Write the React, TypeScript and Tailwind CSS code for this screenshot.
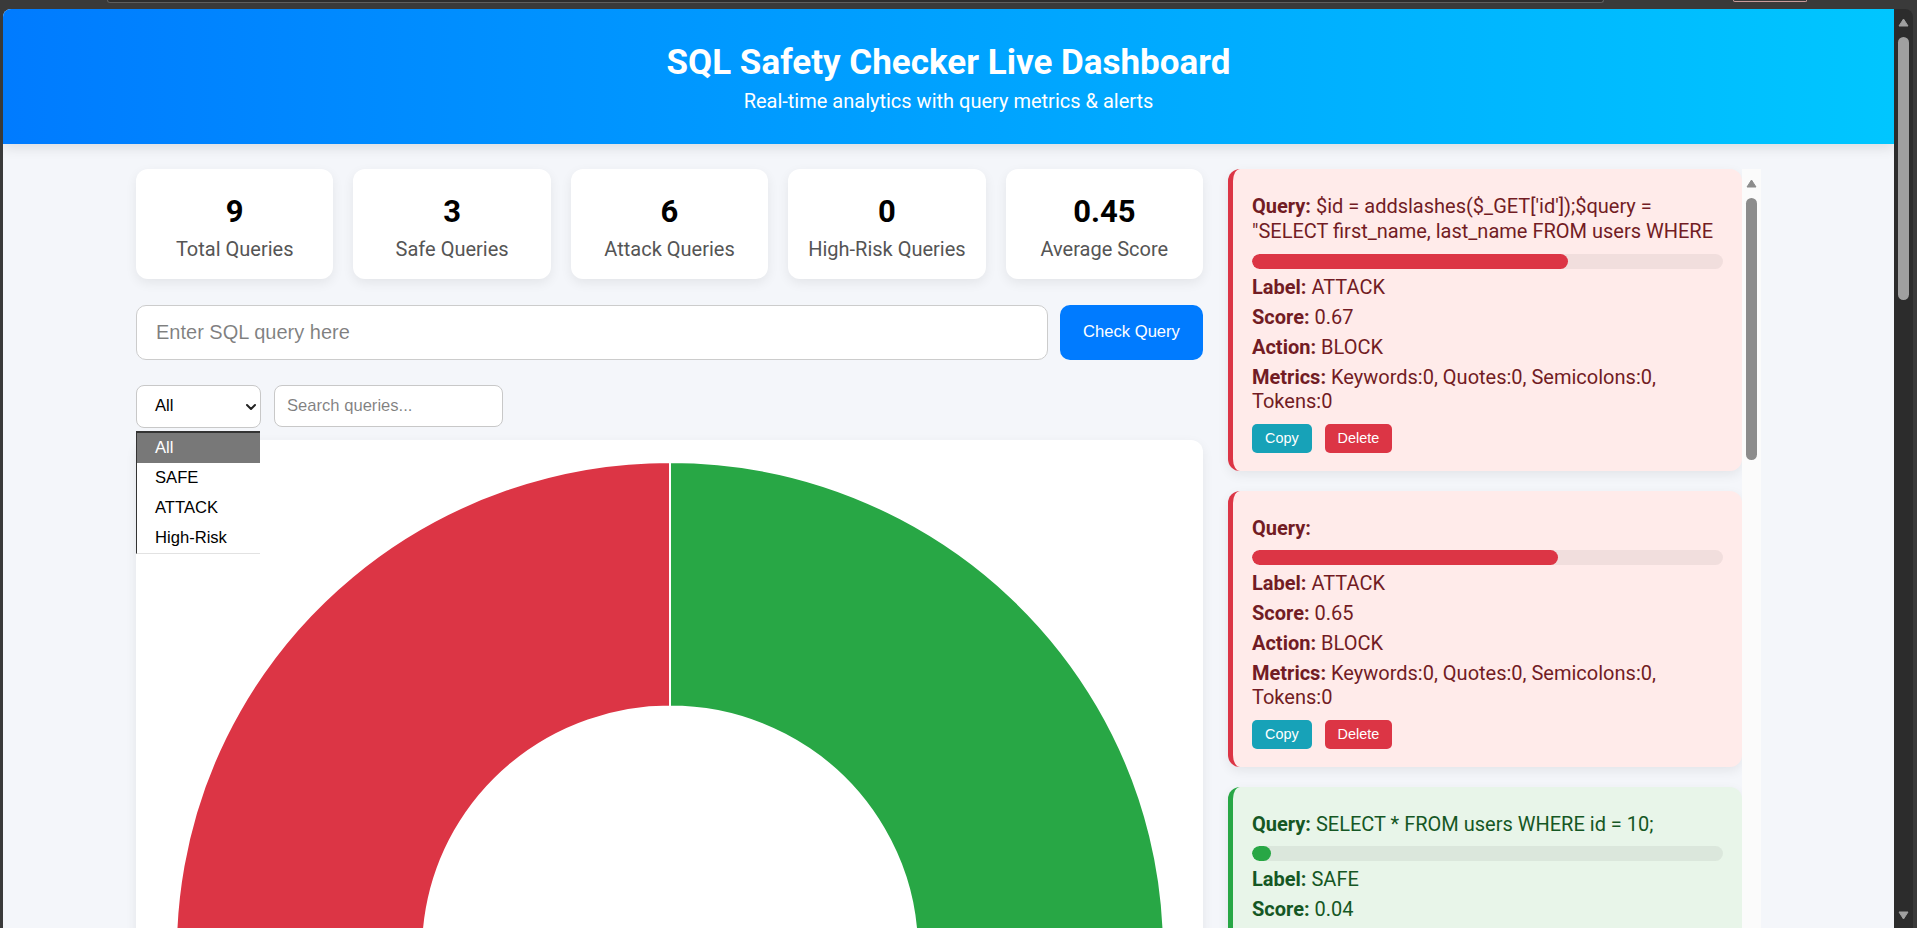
import { ChevronDown } from "lucide-react";

interface Alert {
  query: string[];
  label: string;
  score: number;
  action: string;
  metrics: string;
  tone: "red" | "green";
}

const stats = [
  { value: "9", label: "Total Queries" },
  { value: "3", label: "Safe Queries" },
  { value: "6", label: "Attack Queries" },
  { value: "0", label: "High-Risk Queries" },
  { value: "0.45", label: "Average Score" },
];

const alerts: Alert[] = [
  {
    query: ["$id = addslashes($_GET['id']);$query =", "\"SELECT first_name, last_name FROM users WHERE"],
    label: "ATTACK",
    score: 0.67,
    action: "BLOCK",
    metrics: "Keywords:0, Quotes:0, Semicolons:0, Tokens:0",
    tone: "red",
  },
  {
    query: [],
    label: "ATTACK",
    score: 0.65,
    action: "BLOCK",
    metrics: "Keywords:0, Quotes:0, Semicolons:0, Tokens:0",
    tone: "red",
  },
  {
    query: ["SELECT * FROM users WHERE id = 10;"],
    label: "SAFE",
    score: 0.04,
    action: "ALLOW",
    metrics: "Keywords:1, Quotes:0, Semicolons:1, Tokens:8",
    tone: "green",
  },
];

const StatCard = ({ value, label }: { value: string; label: string }) => (
  <div className="flex-1 bg-white rounded-[12px] shadow-[0_4px_12px_rgba(0,0,0,0.07)] pt-[25px] pb-[18px] text-center">
    <div className="text-[31px] font-bold leading-[36px] text-black">{value}</div>
    <div className="mt-[8px] text-[20px] leading-[23px] text-[#555]">{label}</div>
  </div>
);

const AlertCard = ({ alert }: { alert: Alert }) => {
  const red = alert.tone === "red";
  return (
    <div
      className={
        red
          ? "rounded-[12px] border-l-[5px] border-[#dc3545] bg-[#ffebea] text-[#721c24] pt-[25px] pb-[18px] px-[19px] shadow-[0_4px_12px_rgba(0,0,0,0.07)] text-[20px] leading-[24px]"
          : "rounded-[12px] border-l-[5px] border-[#28a745] bg-[#e8f5e9] text-[#155724] pt-[25px] pb-[18px] px-[19px] shadow-[0_4px_12px_rgba(0,0,0,0.07)] text-[20px] leading-[24px]"
      }
    >
      <p className={alert.query.length > 1 ? "leading-[25px]" : ""}>
        <b>Query:</b>{" "}
        {alert.query.map((line, i) => (
          <span key={i}>
            {i > 0 && <br />}
            {line}
          </span>
        ))}
      </p>
      <div className="mt-[10px] h-[15px] rounded-full bg-black/[0.055] overflow-hidden">
        <div
          className={red ? "h-full rounded-full bg-[#dc3545]" : "h-full rounded-full bg-[#28a745]"}
          style={{ width: `${alert.score * 100}%` }}
        />
      </div>
      <p className="mt-[6px]">
        <b>Label:</b> {alert.label}
      </p>
      <p className="mt-[6px]">
        <b>Score:</b> {alert.score.toFixed(2)}
      </p>
      <p className="mt-[6px]">
        <b>Action:</b> {alert.action}
      </p>
      <p className="mt-[6px]">
        <b>Metrics:</b> {alert.metrics}
      </p>
      <div className="mt-[11px] flex gap-[13px] font-['Liberation_Sans',Arial,sans-serif] text-[14.4px] leading-normal">
        <button className="h-[29px] px-[13px] rounded-[5px] bg-[#17a2b8] text-white">Copy</button>
        <button className="h-[29px] px-[13px] rounded-[5px] bg-[#dc3545] text-white">Delete</button>
      </div>
    </div>
  );
};

const Triangle = ({ down, color }: { down?: boolean; color: string }) => (
  <svg width="11" height="9" viewBox="0 0 11 9">
    <path d={down ? "M1 1 H10 L5.5 8 Z" : "M1 8 H10 L5.5 1 Z"} fill={color} stroke={color} strokeLinejoin="round" />
  </svg>
);

const DoughnutChart = () => (
  <svg width="990" height="980" viewBox="0 0 990 980" className="block mx-auto">
    <path
      d="M495 1 A494 489 0 0 1 922.8 734.5 L708.9 612.25 A247 244.5 0 0 0 495 245.5 Z"
      fill="#28a745"
      stroke="#fff"
      strokeWidth="2"
    />
    <path
      d="M922.8 734.5 A494 489 0 1 1 495 1 L495 245.5 A247 244.5 0 1 0 708.9 612.25 Z"
      fill="#dc3545"
      stroke="#fff"
      strokeWidth="2"
    />
  </svg>
);

export default function App() {
  return (
    <div className="w-[1917px] h-[928px] overflow-hidden bg-[#3a3a3a] flex flex-col font-[Roboto,'Liberation_Sans',sans-serif]">
      {/* browser chrome strip */}
      <div className="h-[9px] flex items-start">
        <div className="ml-[107px] w-[1497px] h-[3px] rounded-b-[6px] border-b border-x border-[#5e5e5e] bg-[#2d2d2d]" />
        <div className="ml-[129px] w-[74px] h-[2px] rounded-b-[4px] border-b border-x border-[#c99a9a]" />
      </div>

      <div className="flex-1 flex pl-[3px] pr-[4px] min-h-0">
        <div className="flex-1 flex rounded-t-[8px] overflow-hidden">
          {/* page */}
          <div className="w-[1891px] bg-[#f4f6fa] flex flex-col overflow-hidden">
            <header className="h-[135px] shrink-0 bg-linear-to-r from-[#007bff] to-[#00c6ff] text-white flex flex-col items-center pt-[33px] shadow-[0_4px_12px_rgba(0,0,0,0.1)]">
              <h1 className="text-[35px] font-bold leading-[41px]">SQL Safety Checker Live Dashboard</h1>
              <p className="mt-[6px] text-[20px] leading-[24px]">Real-time analytics with query metrics &amp; alerts</p>
            </header>

            <main className="w-[1625px] mx-auto pt-[25px] flex gap-[25px] items-start">
              {/* left column */}
              <div className="w-[1067px] flex flex-col">
                <div className="flex gap-[20px]">
                  {stats.map((s) => (
                    <StatCard key={s.label} value={s.value} label={s.label} />
                  ))}
                </div>

                <div className="mt-[26px] flex gap-[12px] font-['Liberation_Sans',Arial,sans-serif]">
                  <input
                    className="flex-1 h-[55px] rounded-[10px] border border-[#ccc] bg-white px-[19px] text-[20px] outline-none"
                    placeholder="Enter SQL query here"
                  />
                  <button className="w-[143px] h-[55px] rounded-[10px] bg-[#007bff] text-white text-[16.6px]">
                    Check Query
                  </button>
                </div>

                <div className="relative z-10 mt-[25px] flex items-start gap-[13px] font-['Liberation_Sans',Arial,sans-serif] text-[16.6px]">
                  <div className="w-[125px] h-[43px] rounded-[8px] border border-[#c8c8c8] bg-white flex items-center justify-between pl-[18px] pr-[1px] text-black">
                    <span>All</span>
                    <ChevronDown size={16} strokeWidth={3} className="text-[#222]" />
                  </div>
                  <input
                    className="w-[229px] h-[42px] rounded-[8px] border border-[#c8c8c8] bg-white px-[12px] outline-none"
                    placeholder="Search queries..."
                  />
                  <div className="absolute left-0 top-[46px] w-[124px] bg-white border-l border-t-2 border-l-[#333] border-t-[#333] border-b border-b-[#e2e2e2]">
                    <div className="h-[30px] leading-[30px] pl-[18px] bg-[#787878] text-white">All</div>
                    <div className="h-[30px] leading-[30px] pl-[18px] text-black">SAFE</div>
                    <div className="h-[30px] leading-[30px] pl-[18px] text-black">ATTACK</div>
                    <div className="h-[30px] leading-[30px] pl-[18px] text-black">High-Risk</div>
                  </div>
                </div>

                <div className="mt-[12px] h-[1050px] bg-white rounded-[12px] shadow-[0_4px_12px_rgba(0,0,0,0.07)] pt-[21px]">
                  <DoughnutChart />
                </div>
              </div>

              {/* right column */}
              <div className="w-[533px] flex">
                <div className="w-[514px] flex flex-col gap-[20px]">
                  {alerts.map((a, i) => (
                    <AlertCard key={i} alert={a} />
                  ))}
                </div>
                <div className="w-[19px] bg-[#fbfbfb] flex flex-col items-center pt-[10px]">
                  <Triangle color="#8c8c8c" />
                  <div className="mt-[10px] w-[11px] h-[262px] rounded-full bg-[#8c8c8c]" />
                </div>
              </div>
            </main>
          </div>

          {/* browser scrollbar */}
          <div className="w-[19px] bg-[#2c2c2c] flex flex-col items-center pt-[9px] pb-[8px]">
            <Triangle color="#a0a0a0" />
            <div className="mt-[10px] w-[11px] h-[263px] rounded-full bg-[#a0a0a0]" />
            <div className="flex-1" />
            <Triangle down color="#a0a0a0" />
          </div>
        </div>
      </div>
    </div>
  );
}
